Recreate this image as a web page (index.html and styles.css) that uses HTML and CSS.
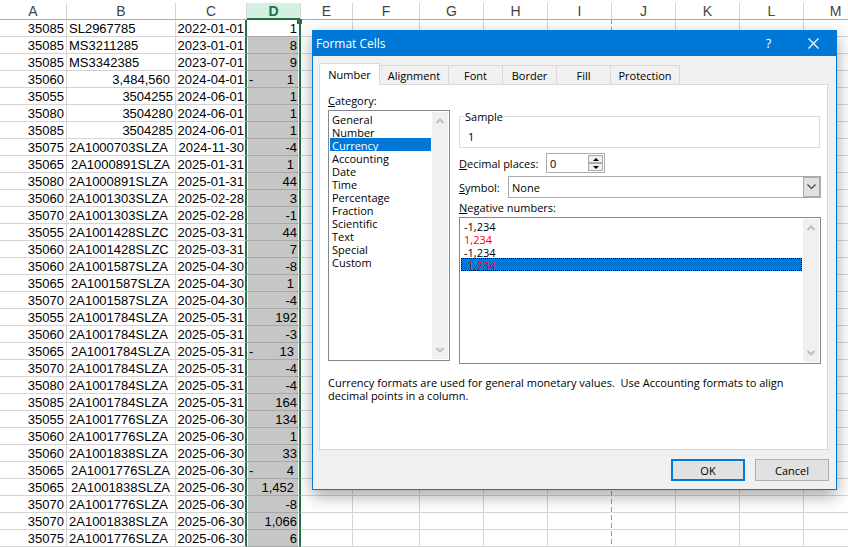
FILE: index.html
```html
<!DOCTYPE html>
<html lang="en">
<head>
    <meta charset="UTF-8">
    <meta name="viewport" content="width=device-width, initial-scale=1.0">
    <title>Format Cells</title>
    <link rel="stylesheet" href="styles.css">
</head>
<body>
    <table class="sheet">
        <colgroup>
            <col class="col-a"><col class="col-b"><col class="col-c"><col class="col-d"><col class="col-e"><col class="col-f">
            <col class="col"><col class="col"><col class="col page-break"><col class="col"><col class="col"><col class="col"><col class="col">
        </colgroup>
        <thead>
            <tr>
                <th>A</th><th>B</th><th>C</th><th class="selected">D<span class="handle"></span></th><th>E</th><th>F</th>
                <th>G</th><th>H</th><th>I</th><th>J</th><th>K</th><th>L</th><th>M</th>
            </tr>
        </thead>
        <tbody id="rows"></tbody>
    </table>

    <div class="dialog" role="dialog" aria-labelledby="dialog-title">
        <div class="titlebar">
            <h1 id="dialog-title">Format Cells</h1>
            <button class="title-btn" aria-label="Help">?</button>
            <button class="title-btn" aria-label="Close">
                <svg width="11" height="11" viewBox="0 0 11 11"><path d="M.5.5l10 10M10.500.5l-10 10" stroke="#fff" stroke-width="1.200" fill="none"/></svg>
            </button>
        </div>

        <div class="tabs" role="tablist">
            <button class="tab active" role="tab" aria-selected="true">Number</button>
            <button class="tab wide" role="tab">Alignment</button>
            <button class="tab" role="tab">Font</button>
            <button class="tab" role="tab">Border</button>
            <button class="tab" role="tab">Fill</button>
            <button class="tab wide" role="tab">Protection</button>
        </div>

        <div class="panel">
            <div class="columns">
                <div class="category">
                    <label for="category"><u>C</u>ategory:</label>
                    <div class="listbox category-list">
                        <select id="category" size="12">
                            <option>General</option>
                            <option>Number</option>
                            <option selected>Currency</option>
                            <option>Accounting</option>
                            <option>Date</option>
                            <option>Time</option>
                            <option>Percentage</option>
                            <option>Fraction</option>
                            <option>Scientific</option>
                            <option>Text</option>
                            <option>Special</option>
                            <option>Custom</option>
                        </select>
                        <div class="scrollbar">
                            <svg width="8" height="6" viewBox="0 0 8 6"><path d="M.5 5L4 1.500 7.500 5" stroke="#bfbfbf" stroke-width="2" fill="none"/></svg>
                            <svg width="8" height="6" viewBox="0 0 8 6"><path d="M.5 1L4 4.500 7.500 1" stroke="#bfbfbf" stroke-width="2" fill="none"/></svg>
                        </div>
                    </div>
                </div>

                <div class="options">
                    <fieldset class="sample">
                        <legend>Sample</legend>
                        <output>1</output>
                    </fieldset>
                    <div class="field">
                        <label for="decimals"><u>D</u>ecimal places:</label>
                        <div class="spinner">
                            <input id="decimals" type="number" min="0" max="30" value="0">
                            <div class="spin-btns">
                                <button id="spin-up" aria-label="Increase"><svg width="6" height="3" viewBox="0 0 6 3"><path d="M3 0l3 3H0z"/></svg></button>
                                <button id="spin-down" aria-label="Decrease"><svg width="6" height="3" viewBox="0 0 6 3"><path d="M0 0h6L3 3z"/></svg></button>
                            </div>
                        </div>
                    </div>
                    <div class="field symbol">
                        <label for="symbol"><u>S</u>ymbol:</label>
                        <div class="dropdown">
                            <select id="symbol"><option>None</option></select>
                            <span class="arrow"><svg width="9" height="6" viewBox="0 0 9 6"><path d="M.5.5l4 4 4-4" stroke="#444" fill="none" stroke-width="1.200"/></svg></span>
                        </div>
                    </div>
                    <label class="negative-label" for="negative"><u>N</u>egative numbers:</label>
                    <div class="listbox negative-list">
                        <select id="negative" size="4">
                            <option>-1,234</option>
                            <option class="red">1,234</option>
                            <option>-1,234</option>
                            <option class="red" selected>-1,234</option>
                        </select>
                        <div class="scrollbar">
                            <svg width="8" height="6" viewBox="0 0 8 6"><path d="M.5 5L4 1.500 7.500 5" stroke="#bfbfbf" stroke-width="2" fill="none"/></svg>
                            <svg width="8" height="6" viewBox="0 0 8 6"><path d="M.5 1L4 4.500 7.500 1" stroke="#bfbfbf" stroke-width="2" fill="none"/></svg>
                        </div>
                    </div>
                </div>
            </div>
            <p class="hint">Currency formats are used for general monetary values.&nbsp; Use Accounting formats to align decimal points in a column.</p>
        </div>

        <div class="actions">
            <button class="btn primary">OK</button>
            <button class="btn">Cancel</button>
        </div>
    </div>

    <script src="script.js"></script>
</body>
</html>
```

FILE: styles.css
```css
body {
    margin: 0;
    background: #fff;
    font-family: "Open Sans", "Noto Sans", sans-serif;
    font-size: 11px;
    line-height: 13px;
    color: #000;
    overflow: hidden;
}
button, input, select {
    font: inherit;
    color: inherit;
    border-radius: 0;
    margin: 0;
}

/* Worksheet */
.sheet {
    table-layout: fixed;
    width: 864px;
    margin-top: 3px;
    border-collapse: separate;
    border-spacing: 0;
    font-family: "Liberation Sans", Arial, sans-serif;
    font-size: 13px;
    line-height: 15px;
}
.col-a { width: 67px; }
.col-b { width: 109px; }
.col-c { width: 71px; }
.col-d { width: 54px; }
.col-e { width: 52px; }
.col-f { width: 67px; }
.col { width: 64px; }
.page-break {
    background: repeating-linear-gradient(#999 0 5px, #fff 5px 8px) right / 1px 100% no-repeat;
}
.sheet th {
    height: 16px;
    padding: 0;
    border-right: 1px solid #d4d4d4;
    border-bottom: 1px solid #ababab;
    font-size: 14px;
    line-height: 16px;
    font-weight: normal;
    color: #444;
}
.sheet th.selected {
    position: relative;
    background: #d3f0e0;
    color: #217346;
    font-weight: bold;
    border-bottom-color: #217346;
    box-shadow: inset 0 -1px #217346;
}
.handle {
    position: absolute;
    right: -2px;
    bottom: -5px;
    width: 5px;
    height: 5px;
    background: #217346;
}
.sheet td {
    height: 15px;
    padding: 1px 2px 0;
    border-right: 1px solid #d4d4d4;
    border-bottom: 1px solid #d4d4d4;
    text-align: right;
    white-space: pre;
}
.sheet td.text {
    text-align: left;
}
.sheet td.acct {
    padding-right: 5px;
}
.sheet td:nth-child(3) {
    padding: 1px 1px 0;
    border-right: 2px solid #217346;
}
.sheet td:nth-child(4) {
    background: #c6c6c6;
    border-right: 2px solid #217346;
    border-bottom-color: #a8a8a8;
    box-shadow: inset 1px 0 #fff, inset -1px 0 #fff;
}
.sheet tr:first-child td:nth-child(4) {
    background: #fff;
}
.sheet td:nth-child(9) {
    border-right-color: transparent;
}
.minus {
    float: left;
}

/* Format Cells dialog */
.dialog {
    position: absolute;
    top: 30px;
    left: 312px;
    right: 11px;
    background: #f0f0f0;
    border: 1px solid #0078d7;
    box-shadow: 0 6px 16px rgba(0, 0, 0, 0.35);
}
.titlebar {
    display: flex;
    align-items: center;
    height: 25px;
    padding-left: 3px;
    background: #0078d7;
    color: #fff;
}
.titlebar h1 {
    flex: 1;
    margin: 0;
    font-size: 12px;
    font-weight: normal;
}
.title-btn {
    width: 45px;
    height: 25px;
    padding: 0;
    border: none;
    background: none;
    font-size: 13px;
    display: flex;
    align-items: center;
    justify-content: center;
}
.tabs {
    display: flex;
    align-items: flex-end;
    padding: 7px 6px 0;
}
.tab {
    width: 54px;
    height: 19px;
    padding: 0;
    border: 1px solid #d9d9d9;
    border-width: 1px 1px 0 0;
    background: #f0f0f0;
}
.tab.wide {
    width: 69px;
}
.tab.active {
    position: relative;
    width: 61px;
    height: 22px;
    margin-bottom: -1px;
    border-left-width: 1px;
    background: #fff;
}
.panel {
    margin: 0 8px 0 6px;
    padding: 9px 6px 47px 8px;
    background: #fff;
    border: 1px solid #d9d9d9;
}
.columns {
    display: flex;
    gap: 9px;
}
.category {
    width: 122px;
}
.category label, .negative-label {
    display: block;
    margin-bottom: 3px;
}
.listbox {
    display: flex;
    box-sizing: border-box;
    padding: 1px;
    background: #fff;
    border: 1px solid #828790;
}
.category-list {
    height: 251px;
}
.negative-list {
    height: 147px;
}
.listbox select {
    flex: 1;
    min-width: 0;
    padding: 0;
    border: none;
    outline: none;
    background: #fff;
    overflow: hidden;
    margin-right: 1px;
}
.listbox option {
    min-height: 13px;
    height: 13px;
    padding: 0 2px;
    line-height: 11px;
}
.listbox option:checked {
    background: linear-gradient(#0078d7, #0078d7);
    -webkit-text-fill-color: #fff;
}
.negative-list option {
    box-sizing: border-box;
    padding: 0 3px;
    line-height: 13px;
}
.listbox option.red {
    color: #f00;
    -webkit-text-fill-color: #f00;
}
.negative-list option:checked {
    outline: 1px dotted #000;
    outline-offset: -1px;
}
.scrollbar {
    width: 16px;
    box-sizing: border-box;
    padding: 6px 0;
    background: #f0f0f0;
    display: flex;
    flex-direction: column;
    align-items: center;
    justify-content: space-between;
}
.options {
    flex: 1;
}
.sample {
    height: 38px;
    box-sizing: border-box;
    margin: 16px 1px 5px 0;
    padding: 7px 8px 0;
    border: 1px solid #dcdcdc;
}
.sample legend {
    margin-left: -4px;
    padding: 0 1px;
}
.field {
    display: flex;
    align-items: center;
    margin-bottom: 3px;
}
.field label {
    width: 87px;
}
.symbol label {
    width: 49px;
}
.spinner {
    display: flex;
    box-sizing: border-box;
    width: 59px;
    height: 20px;
    padding: 1px;
    border: 1px solid #ababab;
}
.spinner input {
    flex: 1;
    min-width: 0;
    padding: 0 2px;
    border: none;
    appearance: textfield;
}
.spinner input::-webkit-inner-spin-button {
    display: none;
}
.spin-btns {
    display: flex;
    flex-direction: column;
    width: 15px;
}
.spin-btns button {
    flex: 1;
    display: flex;
    align-items: center;
    justify-content: center;
    min-height: 0;
    padding: 0;
    border: 1px solid #ababab;
    background: #f0f0f0;
}
.dropdown {
    flex: 1;
    display: flex;
    box-sizing: border-box;
    height: 22px;
    border: 1px solid #ababab;
    position: relative;
}
.dropdown select {
    flex: 1;
    padding: 0 20px 0 3px;
    border: none;
    background: #fff;
    appearance: none;
}
.arrow {
    position: absolute;
    top: 0;
    right: 0;
    bottom: 0;
    width: 15px;
    border: 1px solid #ababab;
    background: #e1e1e1;
    display: flex;
    align-items: center;
    justify-content: center;
    pointer-events: none;
}
.hint {
    margin: 12px 0 0;
}
.actions {
    display: flex;
    justify-content: flex-end;
    gap: 10px;
    padding: 9px 7px 8px;
}
.btn {
    width: 74px;
    height: 22px;
    padding: 0;
    border: 1px solid #adadad;
    background: #e1e1e1;
}
.btn.primary {
    border: 2px solid #0078d7;
}
```

FILE: script.js
```js
// a trailing space marks values in the accounting format
const data = [
    ["35085", "SL2967785", "2022-01-01", "1"],
    ["35085", "MS3211285", "2023-01-01", "8"],
    ["35085", "MS3342385", "2023-07-01", "9"],
    ["35060", "3,484,560 ", "2024-04-01", "-1 "],
    ["35055", "3504255", "2024-06-01", "1"],
    ["35080", "3504280", "2024-06-01", "1"],
    ["35085", "3504285", "2024-06-01", "1"],
    ["35075", "2A1000703SLZA", "2024-11-30", "-4"],
    ["35065", "2A1000891SLZA ", "2025-01-31", "1 "],
    ["35080", "2A1000891SLZA", "2025-01-31", "44"],
    ["35060", "2A1001303SLZA", "2025-02-28", "3"],
    ["35070", "2A1001303SLZA", "2025-02-28", "-1"],
    ["35055", "2A1001428SLZC", "2025-03-31", "44"],
    ["35060", "2A1001428SLZC", "2025-03-31", "7"],
    ["35060", "2A1001587SLZA", "2025-04-30", "-8"],
    ["35065", "2A1001587SLZA ", "2025-04-30", "1 "],
    ["35070", "2A1001587SLZA", "2025-04-30", "-4"],
    ["35055", "2A1001784SLZA", "2025-05-31", "192"],
    ["35060", "2A1001784SLZA", "2025-05-31", "-3"],
    ["35065", "2A1001784SLZA ", "2025-05-31", "-13 "],
    ["35070", "2A1001784SLZA", "2025-05-31", "-4"],
    ["35080", "2A1001784SLZA", "2025-05-31", "-4"],
    ["35085", "2A1001784SLZA", "2025-05-31", "164"],
    ["35055", "2A1001776SLZA", "2025-06-30", "134"],
    ["35060", "2A1001776SLZA", "2025-06-30", "1"],
    ["35060", "2A1001838SLZA", "2025-06-30", "33"],
    ["35065", "2A1001776SLZA ", "2025-06-30", "-4 "],
    ["35065", "2A1001838SLZA ", "2025-06-30", "1,452 "],
    ["35070", "2A1001776SLZA", "2025-06-30", "-8"],
    ["35070", "2A1001838SLZA", "2025-06-30", "1,066"],
    ["35075", "2A1001776SLZA", "2025-06-30", "6"]
];

function addCell(row, value) {
    const cell = row.insertCell();
    if (value.endsWith(" ")) {
        cell.className = "acct";
        value = value.trim();
        if (value.startsWith("-")) {
            cell.innerHTML = `<span class="minus">-</span>${value.slice(1)}`;
            return;
        }
    } else if (/[A-Z]/.test(value)) {
        cell.className = "text";
    }
    cell.textContent = value;
}

const tbody = document.getElementById("rows");
data.forEach(values => {
    const row = tbody.insertRow();
    values.forEach(value => addCell(row, value));
    for (let i = 0; i < 9; i++) {
        row.insertCell();
    }
});

const decimals = document.getElementById("decimals");
document.getElementById("spin-up").addEventListener("click", () => decimals.stepUp());
document.getElementById("spin-down").addEventListener("click", () => decimals.stepDown());
```
